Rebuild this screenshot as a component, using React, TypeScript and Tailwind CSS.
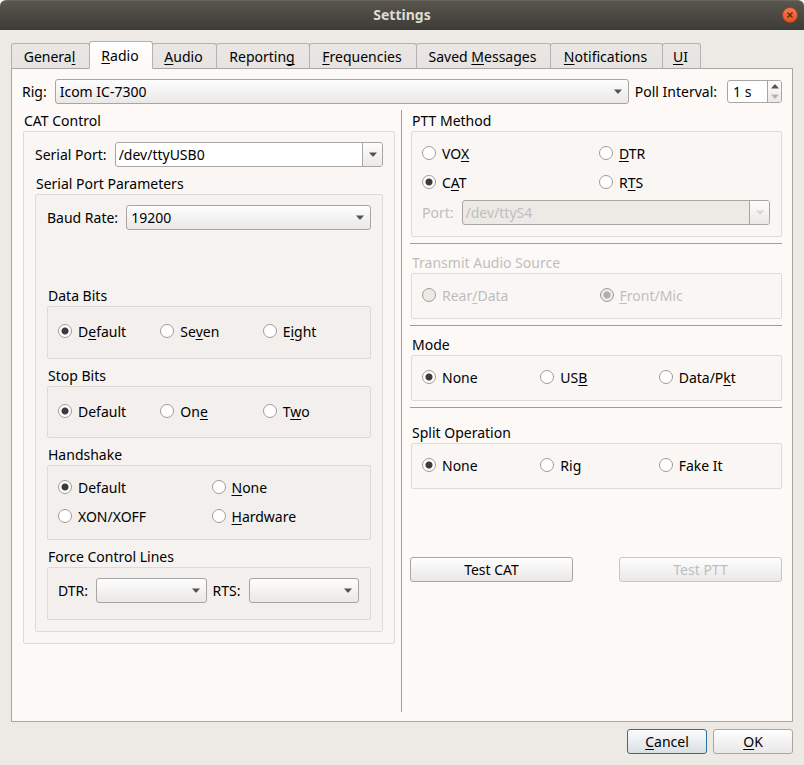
import { useState, type ReactNode } from "react";
import clsx from "clsx";

// "&" marks the mnemonic letter, the same way Qt does it
function Mnemonic({ text }: { text: string }) {
  const at = text.indexOf("&");
  if (at < 0) return <>{text}</>;
  return (
    <span className="whitespace-pre">
      {text.slice(0, at)}
      <span className="underline decoration-1 underline-offset-2 [text-decoration-skip-ink:none]">
        {text[at + 1]}
      </span>
      {text.slice(at + 2)}
    </span>
  );
}

function Arrow({ up, className }: { up?: boolean; className?: string }) {
  return (
    <svg viewBox="0 0 8 5" className={clsx("h-[5px] w-2 fill-current", className)} aria-hidden="true">
      <path d={up ? "M0 4.5 L3.5 0.5 H4.5 L8 4.5 Z" : "M0 0.5 L3.5 4.5 H4.5 L8 0.5 Z"} />
    </svg>
  );
}

function Select({ id, options }: { id: string; options: string[] }) {
  return (
    <div className="relative min-w-0 flex-1">
      <select
        id={id}
        className="block h-[25px] w-full appearance-none rounded-[3px] border border-[#a9a5a2] bg-linear-to-b from-[#fefefe] to-[#eae8e6] px-1 pr-5 leading-5 text-black"
      >
        {options.map((o) => (
          <option key={o}>{o}</option>
        ))}
      </select>
      <Arrow className="pointer-events-none absolute top-[10px] right-[7px] text-[#555250]" />
    </div>
  );
}

function ComboBox({ id, value, disabled }: { id: string; value: string; disabled?: boolean }) {
  return (
    <div
      className={clsx(
        "flex h-[25px] min-w-0 flex-1 overflow-hidden rounded-[3px] border border-[#a9a5a2]",
        disabled ? "bg-[#edeae6]" : "bg-white"
      )}
    >
      <input
        id={id}
        type="text"
        defaultValue={value}
        disabled={disabled}
        className="min-w-0 flex-1 px-[3px] leading-5 text-black disabled:text-[#bebebe]"
      />
      <button
        type="button"
        disabled={disabled}
        aria-label="Show ports"
        className="flex w-5 items-center justify-center border-l border-[#a9a5a2] bg-linear-to-b from-[#fdfdfc] to-[#ebe9e7] text-[#555250] disabled:text-[#d9d7d5]"
      >
        <Arrow />
      </button>
    </div>
  );
}

function Radio({ name, label, checked, disabled }: { name: string; label: string; checked?: boolean; disabled?: boolean }) {
  return (
    <label className={clsx("flex h-5 items-center gap-1.5", disabled && "text-[#bebebe]")}>
      <input
        type="radio"
        name={name}
        defaultChecked={checked}
        disabled={disabled}
        className="mb-0.5 size-3.5 shrink-0 appearance-none rounded-full border border-[#9f9b98] bg-white checked:bg-[radial-gradient(circle,#3b3b3b_3px,#ffffff_4px)] disabled:bg-[#edeae6] disabled:checked:bg-[radial-gradient(circle,#b0aeac_3px,#edeae6_4px)]"
      />
      <Mnemonic text={label} />
    </label>
  );
}

function Group({ title, disabled, className, children }: { title: string; disabled?: boolean; className: string; children: ReactNode }) {
  return (
    <fieldset className="min-w-0">
      <legend className={clsx("block px-px leading-5", disabled && "text-[#bebebe]")}>{title}</legend>
      <div className={clsx("rounded-[2px] border border-[#dedad7]", className)}>{children}</div>
    </fieldset>
  );
}

function Button({ label, disabled, className }: { label: string; disabled?: boolean; className: string }) {
  return (
    <button
      type="button"
      disabled={disabled}
      className={clsx(
        "h-[25px] rounded-[3px] border bg-linear-to-b leading-5 disabled:border-[#c9c6c3] disabled:text-[#bebebe]",
        className
      )}
    >
      <Mnemonic text={label} />
    </button>
  );
}

const tabs = [
  { label: "Genera&l", width: "w-[79px]" },
  { label: "&Radio", width: "w-[64px]" },
  { label: "&Audio", width: "w-[65px]" },
  { label: "Reportin&g", width: "w-[94px]" },
  { label: "&Frequencies", width: "w-[108px]" },
  { label: "Saved &Messages", width: "w-[135px]" },
  { label: "&Notifications", width: "w-[113px]" },
  { label: "&UI", width: "w-[39px]" },
];

const plainButton = "border-[#a9a5a2] from-[#fefefe] to-[#eae8e6]";
const leafBox = "bg-[#f2efed] pr-[11px] pl-2.5";
const rightBox = "bg-[#f9f6f3] px-2.5 py-3";

export default function App() {
  const [active, setActive] = useState(1);

  return (
    <div className="flex min-h-screen flex-col bg-white font-['Noto_Sans',sans-serif] text-[14px] leading-5 text-black">
      {/* Title bar */}
      <header className="relative flex h-[30px] items-center justify-center rounded-t-md border-t border-[#6b675f] bg-linear-to-b from-[#59564e] to-[#3d3b36] pb-0.5">
        <h1 className="font-bold text-[#dfdbd2]">Settings</h1>
        <button
          type="button"
          aria-label="Close"
          className="absolute top-1.5 right-1.5 flex size-4 items-center justify-center rounded-full border border-[#a84422] bg-linear-to-b from-[#f47a50] to-[#e4521f]"
        >
          <svg viewBox="0 0 6 6" className="size-1.5 stroke-[#55240f]" aria-hidden="true">
            <path d="M0.5 0.5 L5.5 5.5 M5.5 0.5 L0.5 5.5" strokeWidth="1.2" />
          </svg>
        </button>
      </header>

      <main className="flex flex-1 flex-col bg-[#edeae5] px-[11px] pt-[11px] pb-[11px]">
        {/* Tabs */}
        <div role="tablist" className="relative -mb-px flex h-7 items-end">
          {tabs.map((tab, i) => (
            <button
              key={tab.label}
              type="button"
              role="tab"
              aria-selected={i === active}
              onClick={() => setActive(i)}
              className={clsx(
                "-ml-px flex shrink-0 items-center justify-center rounded-t-[3px] border border-[#b5b1ae] pr-0.5 first:ml-0",
                tab.width,
                i === active
                  ? "z-10 h-7 border-b-[#fdf9f6] bg-linear-to-b from-white to-[#fdf9f6] pt-0.5"
                  : "h-[26px] border-b-[#a9a5a2] bg-linear-to-b from-[#e9e6e3] to-[#e6e3e1] pt-0.5"
              )}
            >
              <Mnemonic text={tab.label} />
            </button>
          ))}
        </div>

        {/* Radio page */}
        <div className="flex flex-1 flex-col border border-[#a9a5a2] bg-[#fdf9f6] px-2.5 pt-2.5 pb-[9px]">
          <div className="flex items-center">
            <label htmlFor="rig" className="mr-2">Rig:</label>
            <Select id="rig" options={["Icom IC-7300"]} />
            <label htmlFor="poll" className="mr-2.5 ml-1.5">Poll Interval:</label>
            <div className="flex h-[23px] w-[55px] overflow-hidden rounded-[3px] border border-[#a9a5a2] bg-white">
              <input id="poll" type="text" defaultValue="1 s" className="min-w-0 flex-1 pl-[5px] leading-5" />
              <div className="flex w-3.5 flex-col border-l border-[#a9a5a2] bg-linear-to-b from-[#fdfdfc] to-[#ebe9e7]">
                <button type="button" aria-label="Increase" className="flex flex-1 items-center justify-center text-[#555250]">
                  <Arrow up />
                </button>
                <button type="button" aria-label="Decrease" className="flex flex-1 items-center justify-center text-[#b5b2b0]">
                  <Arrow />
                </button>
              </div>
            </div>
          </div>

          <div className="mt-1.5 flex flex-1 pl-px">
            {/* CAT */}
            <section className="min-w-0 flex-1 pt-px">
              <Group title="CAT Control" className="bg-[#f9f6f3] px-[11px] pt-2.5 pb-[11px]">
                <div className="mb-[7px] flex items-center">
                  <label htmlFor="serial" className="mr-2">Serial Port:</label>
                  <ComboBox id="serial" value="/dev/ttyUSB0" />
                </div>
                <Group title="Serial Port Parameters" className="flex flex-col gap-[7px] bg-[#f5f2ef] px-[11px] pt-2.5 pb-[11px]">
                  <div className="mb-[49px] flex items-center">
                    <label htmlFor="baud" className="mr-2">Baud Rate:</label>
                    <Select id="baud" options={["19200"]} />
                  </div>
                  <Group title="Data Bits" className={clsx(leafBox, "grid grid-cols-3 gap-1.5 pt-[15px] pb-4")}>
                    <Radio name="data" label="D&efault" checked />
                    <Radio name="data" label="Se&ven" />
                    <Radio name="data" label="E&ight" />
                  </Group>
                  <Group title="Stop Bits" className={clsx(leafBox, "grid grid-cols-3 gap-1.5 py-[15px]")}>
                    <Radio name="stop" label="Default" checked />
                    <Radio name="stop" label="On&e" />
                    <Radio name="stop" label="T&wo" />
                  </Group>
                  <Group title="Handshake" className={clsx(leafBox, "grid grid-cols-2 gap-x-1.5 gap-y-[9px] py-3")}>
                    <Radio name="handshake" label="Default" checked />
                    <Radio name="handshake" label="&None" />
                    <Radio name="handshake" label="XON/XOFF" />
                    <Radio name="handshake" label="&Hardware" />
                  </Group>
                  <Group title="Force Control Lines" className={clsx(leafBox, "flex items-center pt-2.5 pb-4")}>
                    <label htmlFor="dtr" className="mr-2">DTR:</label>
                    <Select id="dtr" options={[""]} />
                    <label htmlFor="rts" className="mr-2 ml-1.5">RTS:</label>
                    <Select id="rts" options={[""]} />
                  </Group>
                </Group>
              </Group>
            </section>

            <div className="mr-2 ml-1.5 w-px bg-[#a09c99]" />

            {/* PTT, audio, mode, split */}
            <section className="min-w-0 flex-1 pt-px">
              <div className="pl-px">
                <Group title="PTT Method" className="bg-[#f9f6f3] pt-3 pr-[11px] pb-[11px] pl-2.5">
                  <div className="grid grid-cols-2 gap-x-1.5 gap-y-[9px]">
                    <Radio name="ptt" label="VO&X" />
                    <Radio name="ptt" label="&DTR" />
                    <Radio name="ptt" label="C&AT" checked />
                    <Radio name="ptt" label="R&TS" />
                  </div>
                  <div className="mt-[7px] flex items-center">
                    <label htmlFor="ptt-port" className="mr-2 text-[#bebebe]">Port:</label>
                    <ComboBox id="ptt-port" value="/dev/ttyS4" disabled />
                  </div>
                </Group>
              </div>
              <hr className="mt-1.5 mb-[9px] border-[#a09c99]" />
              <div className="pl-px">
                <Group title="Transmit Audio Source" disabled className={clsx(rightBox, "grid grid-cols-2 gap-1.5")}>
                  <Radio name="audio" label="Rear&/Data" disabled />
                  <Radio name="audio" label="&Front/Mic" checked disabled />
                </Group>
              </div>
              <hr className="mt-1.5 mb-[9px] border-[#a09c99]" />
              <div className="pl-px">
                <Group title="Mode" className={clsx(rightBox, "grid grid-cols-3 gap-1.5")}>
                  <Radio name="mode" label="None" checked />
                  <Radio name="mode" label="US&B" />
                  <Radio name="mode" label="Data/P&kt" />
                </Group>
              </div>
              <hr className="mt-1.5 mb-[15px] border-[#a09c99]" />
              <div className="pl-px">
                <Group title="Split Operation" className={clsx(rightBox, "grid grid-cols-3 gap-1.5")}>
                  <Radio name="split" label="None" checked />
                  <Radio name="split" label="Rig" />
                  <Radio name="split" label="Fake It" />
                </Group>
              </div>
              <div className="mt-[68px] flex gap-[46px]">
                <Button label="Test CAT" className={clsx(plainButton, "flex-1")} />
                <Button label="Test PTT" disabled className={clsx(plainButton, "flex-1")} />
              </div>
            </section>
          </div>
        </div>

        <footer className="mt-[7px] flex justify-end gap-1.5">
          <Button label="&Cancel" className="w-20 border-[#2f6f9f] from-[#fbfcfd] to-[#d9dfe3]" />
          <Button label="&OK" className={clsx(plainButton, "w-20")} />
        </footer>
      </main>
    </div>
  );
}
